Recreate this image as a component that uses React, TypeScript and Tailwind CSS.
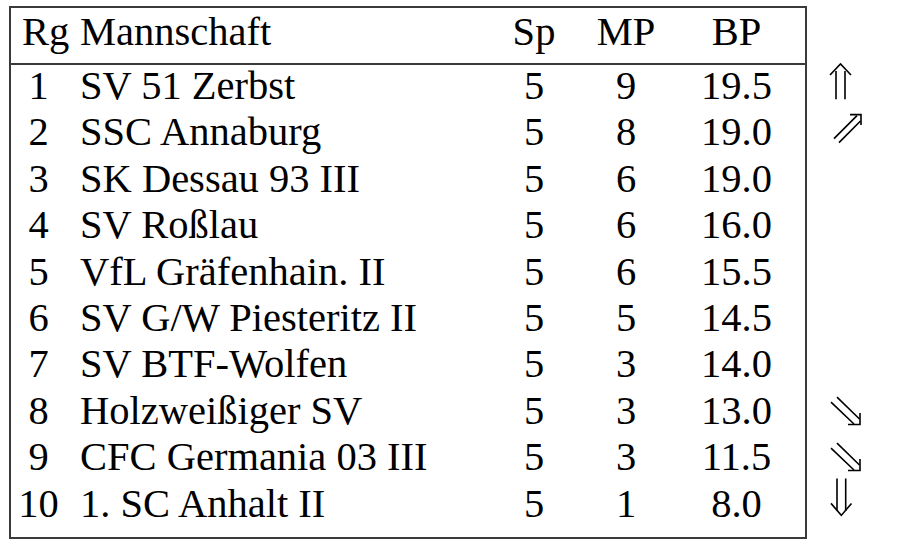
import type { ReactNode } from 'react';

type Trend = 'up' | 'upRight' | 'downRight' | 'down' | null;

type Team = {
  rank: number;
  name: string;
  games: number;
  mp: number;
  bp: string;
  trend: Trend;
};

const teams: Team[] = [
  { rank: 1, name: 'SV 51 Zerbst', games: 5, mp: 9, bp: '19.5', trend: 'up' },
  { rank: 2, name: 'SSC Annaburg', games: 5, mp: 8, bp: '19.0', trend: 'upRight' },
  { rank: 3, name: 'SK Dessau 93 III', games: 5, mp: 6, bp: '19.0', trend: null },
  { rank: 4, name: 'SV Roßlau', games: 5, mp: 6, bp: '16.0', trend: null },
  { rank: 5, name: 'VfL Gräfenhain. II', games: 5, mp: 6, bp: '15.5', trend: null },
  { rank: 6, name: 'SV G/W Piesteritz II', games: 5, mp: 5, bp: '14.5', trend: null },
  { rank: 7, name: 'SV BTF-Wolfen', games: 5, mp: 3, bp: '14.0', trend: null },
  { rank: 8, name: 'Holzweißiger SV', games: 5, mp: 3, bp: '13.0', trend: 'downRight' },
  { rank: 9, name: 'CFC Germania 03 III', games: 5, mp: 3, bp: '11.5', trend: 'downRight' },
  { rank: 10, name: '1. SC Anhalt II', games: 5, mp: 1, bp: '8.0', trend: 'down' },
];

const cols = 'grid grid-cols-[55px_434px_68px_116px_105px_1fr]';

// double-stroke arrows, drawn in row-local coordinates (44 x 46.4)
const arrowPaths: Record<Exclude<Trend, null>, ReactNode> = {
  up: (
    <>
      <path d="M4 10 L14.5 -1 L25 10" />
      <path d="M10 6 V34.3 M19 6 V34.3" />
    </>
  ),
  upRight: (
    <>
      <path d="M24 3.6 H35 V14" />
      <path d="M8 27.6 L31 4.6 M13 31.6 L34.5 10" />
    </>
  ),
  downRight: (
    <>
      <path d="M22 34.5 H34 V23" />
      <path d="M5 12.2 L28 34 M11 7.2 L33.5 29" />
    </>
  ),
  down: (
    <>
      <path d="M5 20.4 L15.3 32.4 L25.5 20.4" />
      <path d="M11 -4.6 V28 M19.7 -4.6 V28" />
    </>
  ),
};

const Arrow = ({ trend }: { trend: Trend }) => (
  <div className="h-[46.4px] w-[44px]">
    {trend && (
      <svg
        width="44"
        height="46.4"
        viewBox="0 0 44 46.4"
        className="overflow-visible"
        fill="none"
        stroke="#000"
        strokeWidth="1.6"
        strokeLinejoin="miter"
      >
        {arrowPaths[trend]}
      </svg>
    )}
  </div>
);

export default function App() {
  return (
    <div className="h-[560px] w-[915px] bg-white font-['Liberation_Serif','Times_New_Roman',serif] text-[40.5px] text-black">
      <div className="flex pl-[9px] pt-[6px]">
        <div className="h-[533px] w-[798px] border-2 border-[#3a3a3a]">
          {/* header */}
          <div className={`${cols} h-[57px] border-b-2 border-[#3a3a3a] leading-[47px] whitespace-nowrap`}>
            <div className="pl-[11px]">Rg</div>
            <div className="pl-[14px]">Mannschaft</div>
            <div className="text-center">Sp</div>
            <div className="text-center">MP</div>
            <div className="text-center">BP</div>
            <div />
          </div>

          {/* rows */}
          {teams.map((t) => (
            <div key={t.rank} className={`${cols} h-[46.4px] leading-[41.4px] whitespace-nowrap`}>
              <div className="text-center">{t.rank}</div>
              <div className="pl-[14px]">{t.name}</div>
              <div className="text-center">{t.games}</div>
              <div className="text-center">{t.mp}</div>
              <div className="text-center">{t.bp}</div>
              <div />
            </div>
          ))}
        </div>

        <div className="ml-[19px] pt-[59px]">
          {teams.map((t) => (
            <Arrow key={t.rank} trend={t.trend} />
          ))}
        </div>
      </div>
    </div>
  );
}
